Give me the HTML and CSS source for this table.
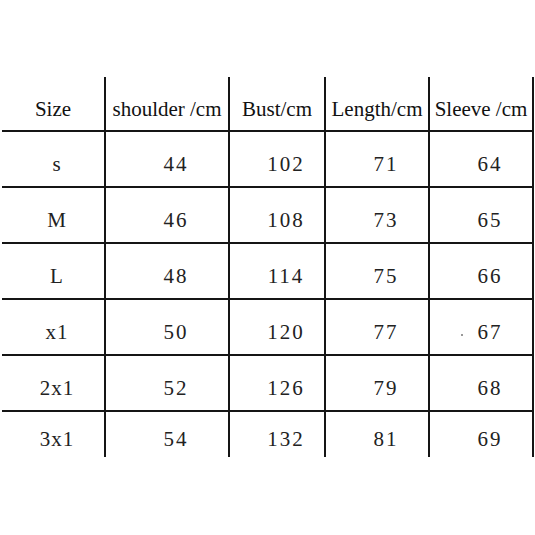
FILE: index.html
```html
<!DOCTYPE html>
<html>
<head>
<meta charset="utf-8">
<link rel="stylesheet" href="styles.css">
</head>
<body>
<div class="page">
  <div class="chart">
    <div class="cell head c1">Size</div>
    <div class="cell head">shoulder /cm</div>
    <div class="cell head">Bust/cm</div>
    <div class="cell head">Length/cm</div>
    <div class="cell head c5">Sleeve /cm</div>

    <div class="cell size c1">s</div>
    <div class="cell num">44</div>
    <div class="cell num">102</div>
    <div class="cell num">71</div>
    <div class="cell num c5">64</div>

    <div class="cell size c1">M</div>
    <div class="cell num">46</div>
    <div class="cell num">108</div>
    <div class="cell num">73</div>
    <div class="cell num c5">65</div>

    <div class="cell size c1">L</div>
    <div class="cell num">48</div>
    <div class="cell num">114</div>
    <div class="cell num">75</div>
    <div class="cell num c5">66</div>

    <div class="cell size c1">x1</div>
    <div class="cell num">50</div>
    <div class="cell num">120</div>
    <div class="cell num">77</div>
    <div class="cell num c5"><span class="speck"></span>67</div>

    <div class="cell size c1">2x1</div>
    <div class="cell num">52</div>
    <div class="cell num">126</div>
    <div class="cell num">79</div>
    <div class="cell num c5">68</div>

    <div class="cell size c1 last">3x1</div>
    <div class="cell num last">54</div>
    <div class="cell num last">132</div>
    <div class="cell num last">81</div>
    <div class="cell num c5 last">69</div>
  </div>
</div>
</body>
</html>
```
FILE: styles.css
```css
html, body {
  margin: 0;
  padding: 0;
  background: #ffffff;
}

.page {
  width: 535px;
  height: 535px;
  padding: 77px 0 0 2px;
  box-sizing: border-box;
  overflow: hidden;
}

.chart {
  display: grid;
  grid-template-columns: 102px 124px 96px 104px 106px;
  grid-template-rows: 55px 56px 56px 56px 56px 56px 45px;
  font-family: "Liberation Serif", "Times New Roman", serif;
}

.cell {
  box-sizing: border-box;
  display: flex;
  align-items: center;
  justify-content: center;
  border-left: 2px solid #151515;
  border-bottom: 2px solid #151515;
  padding-top: 10px;
  color: #1e1e1e;
}

.cell.c1 {
  border-left: none;
}

.cell.c5 {
  border-right: 2px solid #151515;
}

.cell.last {
  border-bottom: none;
}

.head {
  font-size: 21px;
  color: #111111;
  padding-top: 11px;
}

.size {
  font-size: 21px;
  letter-spacing: 1px;
  padding-left: 8px;
  color: #222222;
}

.num {
  font-size: 21px;
  letter-spacing: 2px;
  padding-left: 18px;
  color: #222222;
}

.speck {
  width: 2px;
  height: 2px;
  background: #777777;
  border-radius: 50%;
  margin-left: -17px;
  margin-right: 15px;
  margin-top: 6px;
}
```
